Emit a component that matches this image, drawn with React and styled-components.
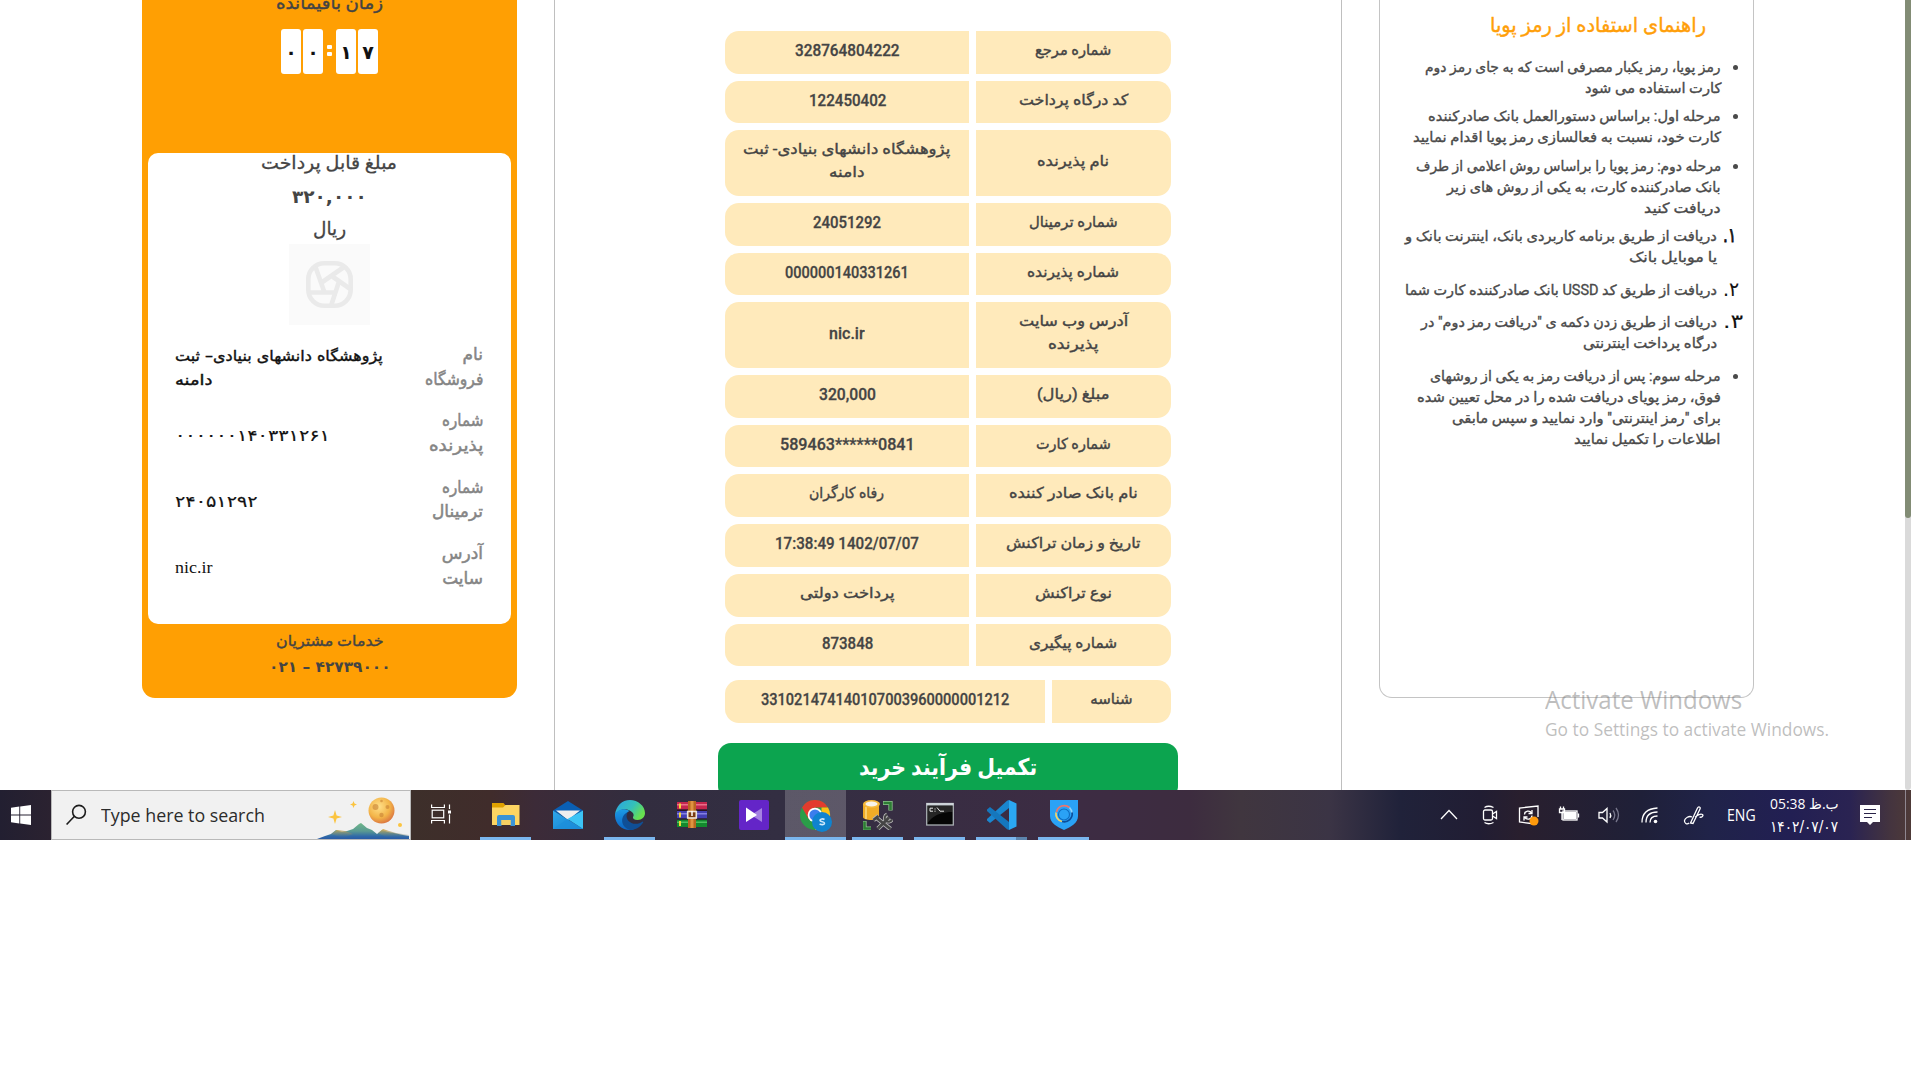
import React, { useLayoutEffect, useRef, useState } from 'react';
import styled, { createGlobalStyle } from 'styled-components';

const Global = createGlobalStyle`
  * { box-sizing: border-box; }
  body { margin: 0; background: #fff; font-family: Roboto, "DejaVu Sans", sans-serif; color: #444; }
`;

/* ---------- text helper: one line condensed to a given width ---------- */
const FitBox = styled.span`
  display: block;
  flex: none;
  width: ${p => p.$w}px;
  height: ${p => p.$lh}px;
  line-height: ${p => p.$lh}px;
  direction: ${p => p.$dir};
`;
const FitText = styled.span`
  display: inline-block;
  vertical-align: top;
  white-space: nowrap;
  height: ${p => p.$lh}px;
  transform-origin: ${p => (p.$dir === 'rtl' ? 'right' : 'left')} center;
  font-family: ${p => p.$font || 'Roboto, "DejaVu Sans", sans-serif'};
  font-size: ${p => p.$size}px;
  font-weight: ${p => p.$weight || 400};
  color: ${p => p.$color || 'inherit'};
  -webkit-text-stroke: ${p => p.$stroke || 0}px currentColor;
`;
function Fit({ w, size = 15, lh = 21, dir = 'rtl', font, weight, color, stroke, children }) {
  const ref = useRef(null);
  const [k, setK] = useState(1);
  useLayoutEffect(() => {
    const n = ref.current.offsetWidth;
    if (n) setK(w / n);
  }, [w, children]);
  return (
    <FitBox $w={w} $lh={lh} $dir={dir}>
      <FitText ref={ref} $lh={lh} $dir={dir} $size={size} $font={font} $weight={weight} $color={color}
        $stroke={stroke} style={{ transform: `scaleX(${k})` }}>
        {children}
      </FitText>
    </FitBox>
  );
}

/* ---------- page frame ---------- */
const Screen = styled.div`
  position: relative;
  width: 1911px;
  height: 840px;
  display: flex;
  flex-direction: column;
`;
const Viewport = styled.div`
  height: 790px;
  display: flex;
  align-items: flex-start;
  padding-left: 142px;
  overflow: hidden;
`;
const ScrollTrack = styled.div`
  width: 6px;
  height: 790px;
  margin-left: auto;
  background: #dadada;
  border-radius: 0 0 3px 3px;
`;
const ScrollThumb = styled.div`
  height: 518px;
  background: #828c75;
  border-radius: 0 0 3px 3px;
`;

/* ---------- merchant card ---------- */
const Merchant = styled.aside`
  width: 375px;
  height: 698px;
  background: #ff9f03;
  border-radius: 0 0 13px 13px;
  display: flex;
  flex-direction: column;
  align-items: center;
  direction: rtl;
`;
const MerchantHead = styled.div`
  height: 153px;
  display: flex;
  flex-direction: column;
  align-items: center;
`;
const HeadTitle = styled.div`
  height: 29px;
  overflow: hidden;
  display: flex;
  align-items: flex-start;
  & > * { margin-top: -9px; }
`;
const Timer = styled.div`
  display: flex;
  direction: ltr;
  align-items: center;
  height: 45px;
  gap: 2px;
`;
const Digit = styled.div`
  width: 20px;
  height: 45px;
  border-radius: 3px;
  background: #fff;
  color: #111;
  font: bold 19px/46px "DejaVu Sans", sans-serif;
  display: flex;
  justify-content: center;
`;
const Colon = styled.div`
  width: 9px;
  display: flex;
  flex-direction: column;
  align-items: center;
  gap: 3px;
  padding-bottom: 2px;
`;
const Dot = styled.i`
  width: 5px;
  height: 4px;
  border-radius: 1px;
  background: #fff;
`;
const Sheet = styled.div`
  width: 363px;
  height: 471px;
  background: #fff;
  border-radius: 10px;
  display: flex;
  flex-direction: column;
  align-items: center;
`;
const Logo = styled.div`
  width: 81px;
  height: 81px;
  margin-top: 7px;
  background: #fafafa;
  display: flex;
  align-items: center;
  justify-content: center;
`;
const Facts = styled.div`
  width: 307px;
  margin-top: 17px;
  display: flex;
  flex-direction: column;
`;
const Fact = styled.div`
  height: 66.4px;
  display: flex;
  justify-content: space-between;
  align-items: flex-start;
`;
const FactLabel = styled.div`
  color: #858585;
`;
const FactValue = styled.div`
  color: #111;
  direction: ltr;
  margin-left: -1px;
  padding-top: ${p => p.$top}px;
`;
const Support = styled.div`
  padding-top: 4px;
  display: flex;
  flex-direction: column;
  align-items: center;
`;

/* ---------- receipt ---------- */
const Receipt = styled.main`
  width: 788px;
  height: 790px;
  margin-left: 37px;
  border: solid #bfbfbf;
  border-width: 0 1px;
  padding: 31px 0 0 163px;
`;
const Table = styled.div`
  width: 460px;
  display: flex;
  flex-direction: column;
  gap: 7px;
  direction: rtl;
  padding: 0 7px;
`;
const Row = styled.div`
  display: flex;
  gap: 7px;
  height: ${p => p.$h}px;
  margin-top: ${p => p.$gap || 0}px;
`;
const Cell = styled.div`
  width: ${p => p.$w}px;
  padding-bottom: 4px;
  background: #ffeabb;
  border-radius: ${p => (p.$side === 'start' ? '0 14px 14px 0' : '14px 0 0 14px')};
  display: flex;
  flex-direction: column;
  align-items: center;
  justify-content: center;
`;
const Finish = styled.button`
  width: 460px;
  height: 56px;
  margin-top: 20px;
  border: 0;
  border-radius: 13px;
  background: #0ca44f;
  color: #fff;
  padding: 8px 0 0;
  display: flex;
  justify-content: center;
  align-items: flex-start;
`;

/* ---------- guide ---------- */
const Guide = styled.section`
  width: 375px;
  height: 698px;
  margin-left: 37px;
  border: 1px solid #c4c4c4;
  border-top: 0;
  border-radius: 0 0 13px 13px;
  direction: rtl;
`;
const GuideTitle = styled.h2`
  margin: 0;
  padding: 11px 47px 0 0;
  height: 57px;
`;
const Item = styled.div`
  display: flex;
  color: #4a4a4a;
  padding-right: ${p => (p.$num ? 0 : 15)}px;
  margin-bottom: ${p => p.$mb}px;
`;
const Bullet = styled.i`
  width: 5px;
  height: 5px;
  margin: 8px 0 0 12px;
  border-radius: 50%;
  background: #4a4a4a;
  flex: none;
`;
const Num = styled.div`
  width: 30px;
  margin-left: 6px;
  height: 20px;
  display: flex;
  justify-content: flex-end;
`;

/* ---------- watermark ---------- */
const Watermark = styled.div`
  position: absolute;
  left: 1545px;
  top: 682px;
  pointer-events: none;
  color: rgba(125, 125, 125, 0.5);
`;

/* ---------- taskbar ---------- */
const Taskbar = styled.footer`
  height: 50px;
  display: flex;
  background: linear-gradient(90deg, #221f31 0, #2b2230 51px, #3d2f2a 411px, #402c2b 490px, #3c2b38 535px,
    #322d3f 640px, #332e42 780px, #3d2c43 1080px, #3d2c3f 1190px, #40363f 1240px, #3b3445 1330px,
    #20223a 1400px, #211d33 1480px, #291f2e 1520px, #1f2038 1640px, #202349 1710px, #221f53 1790px,
    #2a2352 1850px, #44343f 1890px, #4e3a38 1911px);
`;
const Start = styled.div`
  width: 51px;
  display: flex;
  align-items: center;
  padding-left: 11px;
`;
const Search = styled.div`
  width: 360px;
  background: #f1f1f1;
  border: 1px solid #b9b9b9;
  display: flex;
  color: #2b2b2b;
`;
const SearchIcon = styled.div`
  width: 49px;
  padding: 13px 0 0 14px;
`;
const SearchText = styled.div`
  width: 215px;
  padding-top: 11px;
`;
const TaskView = styled.div`
  width: 64px;
  padding: 14px 0 0 20px;
`;
const Slot = styled.div`
  width: 62px;
  display: flex;
  flex-direction: column;
  align-items: center;
  justify-content: space-between;
  padding-top: 10px;
  background: ${p => (p.$active ? 'linear-gradient(90deg, rgba(255,255,255,.2) 61px, transparent 61px)' : 'none')};
`;
const Running = styled.div`
  width: ${p => (p.$wide ? 61 : 51)}px;
  height: 3px;
  margin-left: -1px;
  background: ${p => (p.$split ? 'linear-gradient(90deg, #7ab6ee 40px, #5c84ad 40px)' : p.$on ? '#7ab6ee' : 'none')};
`;
const Tray = styled.div`
  margin-left: auto;
  display: flex;
`;
const TrayIcon = styled.div`
  width: ${p => p.$w}px;
  padding-top: 13px;
  svg { display: block; }
`;
const Lang = styled.div`
  width: 43px;
  padding-top: 13px;
  color: #fff;
`;
const Clock = styled.div`
  width: 90px;
  padding-top: 3px;
  color: #fff;
`;
const Notify = styled.div`
  width: 45px;
  padding-top: 15px;
`;
const Peek = styled.div`
  width: 6px;
  border-left: 1px solid #8f8791;
`;

const SEGOE = '"Open Sans", "Noto Sans", "DejaVu Sans", sans-serif';
const FA = '"DejaVu Sans", sans-serif';

const rows = [
  { h: 43, l: [['شماره مرجع', 76]], v: [['328764804222', 105]] },
  { h: 42, l: [['کد درگاه پرداخت', 109]], v: [['122450402', 77]] },
  { h: 66, l: [['نام پذیرنده', 72]], v: [['پژوهشگاه دانشهای بنیادی- ثبت', 207, 1], ['دامنه', 35, 1]] },
  { h: 43, l: [['شماره ترمینال', 89]], v: [['24051292', 68]] },
  { h: 42, l: [['شماره پذیرنده', 92]], v: [['000000140331261', 124]] },
  { h: 66, l: [['آدرس وب سایت', 109], ['پذیرنده', 50]], v: [['nic.ir', 36]] },
  { h: 43, l: [['مبلغ (ریال)', 72]], v: [['320,000', 57]] },
  { h: 42, l: [['شماره کارت', 75]], v: [['589463******0841', 135]] },
  { h: 43, l: [['نام بانک صادر کننده', 129]], v: [['رفاه کارگران', 75, 1]] },
  { h: 43, l: [['تاریخ و زمان تراکنش', 135]], v: [['17:38:49 1402/07/07', 144]] },
  { h: 43, l: [['نوع تراکنش', 77]], v: [['پرداخت دولتی', 95, 1]] },
  { h: 42, l: [['شماره پیگیری', 88]], v: [['873848', 51]] },
  { h: 43, gap: 7, lw: 119, l: [['شناسه', 42]], v: [['331021474140107003960000001212', 248]] },
];

const guide = [
  { mb: 7, t: [['رمز پویا، رمز یکبار مصرفی است که به جای رمز دوم', 296], ['کارت استفاده می شود', 136]] },
  { mb: 8, t: [['مرحله اول: براساس دستورالعمل بانک صادرکننده', 293], ['کارت خود، نسبت به فعالسازی رمز پویا اقدام نمایید', 308]] },
  { mb: 7, t: [['مرحله دوم: رمز پویا را براساس روش اعلامی از طرف', 305], ['بانک صادرکننده کارت، به یکی از روش های زیر', 274], ['دریافت کنید', 77]] },
  { n: '۱.', nw: 13, mb: 12, t: [['دریافت از طریق برنامه کاربردی بانک، اینترنت بانک و', 312], ['یا موبایل بانک', 88]] },
  { n: '۲.', nw: 16, mb: 11, t: [['دریافت از طریق کد USSD بانک صادرکننده کارت شما', 312]] },
  { n: '۳.', nw: 20, mb: 12, t: [['دریافت از طریق زدن دکمه ی "دریافت رمز دوم" در', 296], ['درگاه پرداخت اینترنتی', 134]] },
  { mb: 0, t: [['مرحله سوم: پس از دریافت رمز به یکی از روشهای', 291], ['فوق، رمز پویای دریافت شده را در محل تعیین شده', 304], ['برای "رمز اینترنتی" وارد نمایید و سپس مابقی', 269], ['اطلاعات را تکمیل نمایید', 147]] },
];

const facts = [
  { l: [['نام', 20], ['فروشگاه', 58]], v: [['پژوهشگاه دانشهای بنیادی– ثبت', 208], ['دامنه', 37]], top: 2 },
  { l: [['شماره', 41], ['پذیرنده', 54]], v: [['۰۰۰۰۰۰۱۴۰۳۳۱۲۶۱', 155]], top: 16, num: true },
  { l: [['شماره', 41], ['ترمینال', 51]], v: [['۲۴۰۵۱۲۹۲', 83]], top: 15, num: true },
  { l: [['آدرس', 41], ['سایت', 41]], v: [['nic.ir', 37]], top: 15, serif: true },
];

/* ---------- icons ---------- */
const Aperture = () => (
  <svg width="47" height="47" viewBox="0 0 47 47" fill="none" stroke="#eaeaea" strokeWidth="4.6">
    <rect x="2.3" y="2.3" width="42.4" height="42.4" rx="16" />
    <path d="M9.500 6l9 25.500M38 6L15 22M25 14.500L45 28.500M4 31.500h26.500M25 45l7.500-23" />
  </svg>
);
const WinLogo = () => (
  <svg width="20" height="20" viewBox="0 0 20 20" fill="#fff">
    <path d="M0 2.8l8.3-1.2v8H0zM9.2 1.5L20 0v9.6H9.2zM0 10.5h8.3v8L0 17.300zM9.200 10.500H20V20L9.200 18.600z" />
  </svg>
);
const Glass = () => (
  <svg width="22" height="22" viewBox="0 0 22 22" fill="none" stroke="#1c1c1c" strokeWidth="1.6">
    <circle cx="13" cy="7.800" r="6.400" /><path d="M8.400 12.300L.6 20.500" />
  </svg>
);
const Scene = () => (
  <svg width="94" height="48" viewBox="0 0 94 48">
    <defs>
      <radialGradient id="moon" cx=".4" cy=".35" r=".7"><stop offset="0" stopColor="#ffe08a" /><stop offset=".6" stopColor="#f3b549" /><stop offset="1" stopColor="#d9703f" /></radialGradient>
      <linearGradient id="hill" x1="0" y1="0" x2="0" y2="1"><stop offset="0" stopColor="#6fb78a" /><stop offset=".45" stopColor="#5a9a92" /><stop offset=".75" stopColor="#2f68a8" /><stop offset="1" stopColor="#2450a4" /></linearGradient>
      <linearGradient id="gold" x1="0" y1="0" x2="0" y2="1"><stop offset="0" stopColor="#d8ab4a" /><stop offset="1" stopColor="#3f6f9c" stopOpacity="0" /></linearGradient>
    </defs>
    <path d="M1 48l8-3 6-2 5-4 6 2 5-1 6-2 6-5 2-1 6 5 5 2 5 4 5-4 6 2 6 1 9 2 6 1v5z" fill="url(#hill)" />
    <path d="M15 43l6-4 8 1 8 3-10 4zM62 42l5-4 6 2 7 2 13 2v2H70z" fill="url(#gold)" />
    <circle cx="65.500" cy="19.500" r="13" fill="url(#moon)" />
    <g fill="#c98234" opacity=".6"><circle cx="59.500" cy="16" r="3" /><circle cx="71.500" cy="16" r="2" /><circle cx="65.500" cy="24" r="2.200" /><circle cx="65.500" cy="10" r="1.300" /></g>
    <g fill="#fbc440"><path d="M19 19l1.600 5.400 5.400 1.600-5.400 1.600-1.600 5.400-1.600-5.400L12 26l5.400-1.600zM37.500 10l1 2.500 2.500 1-2.500 1-1 2.500-1-2.500-2.500-1 2.500-1z" /><circle cx="84" cy="34" r="2" /></g>
  </svg>
);
const TaskViewIcon = () => (
  <svg width="21" height="20" viewBox="0 0 21 20" fill="none" stroke="#fff" strokeWidth="1.200">
    <path d="M.6.500v3h12.800v-3M.6 19.500v-3h12.800v3M18.500.500v4.500M18.500 10.500v9" /><rect x="1.200" y="6.200" width="11.500" height="7.600" /><path fill="#fff" stroke="none" d="M17 6.500h3v3h-3z" />
  </svg>
);
const Folder = () => (
  <svg width="30" height="30" viewBox="0 0 30 30">
    <path d="M1 3h11.500l2 2.500V8H1z" fill="#e0a100" /><path d="M1 7.500h11L14.500 5H28.500V25H1z" fill="#fdd562" />
    <path d="M6 26V17a2 2 0 0 1 2-2H22a2 2 0 0 1 2 2v9h-4.500v-6h-9v6z" fill="#3a93d6" /><path d="M10.500 20h9v5h-9z" fill="#f6cf62" />
  </svg>
);
const Mail = () => (
  <svg width="30" height="30" viewBox="0 0 30 30">
    <defs><linearGradient id="ml" x1="0" y1="0" x2="1" y2="1"><stop offset="0" stopColor="#2ea6ea" /><stop offset="1" stopColor="#1583d0" /></linearGradient></defs>
    <path d="M0 10.500L15 1l15 9.500-15 9z" fill="#0a5fb4" /><path d="M3 10.500h24L15 20z" fill="#f0efef" />
    <path d="M0 10.500L30 29H0z" fill="url(#ml)" /><path d="M30 10.500v18.500L14.500 19z" fill="#3cc4f5" /><path d="M14.500 19L30 29H0z" fill="#1d8fdc" opacity=".7" />
  </svg>
);
const Edge = () => (
  <svg width="30" height="30" viewBox="0 0 30 30">
    <defs>
      <linearGradient id="e1" x1="0" y1="0" x2="1" y2=".5"><stop offset="0" stopColor="#2aa3e6" /><stop offset=".6" stopColor="#35c1b8" /><stop offset="1" stopColor="#68e04f" /></linearGradient>
      <linearGradient id="e2" x1="0" y1="0" x2="0" y2="1"><stop offset="0" stopColor="#1c9be6" /><stop offset="1" stopColor="#0b63c2" /></linearGradient>
    </defs>
    <path d="M0 14.500C1 6 7 0 15 0s15 6 15 13c0 4-3 7-7.500 7-3.500 0-5-1.500-4.500-3 1-1.200.8-3-.3-4.300C13 7.500 5 8 0 14.500z" fill="url(#e1)" />
    <path d="M0 14C3 8.500 10 8 14.500 11c-3 1-4.500 4-4 7 .8 5 6 8.500 11 9.500C19 29.500 17 30 15 30 6 30-.5 23 0 14z" fill="url(#e2)" />
    <path d="M13 12c-3 4-1 9 3.500 11 4 1.800 8.500.5 11-1.500 1 0 .8 1 .3 1.500C25 27.500 20 30 15 30c-6-2-9-7-7.500-12 .8-3 3-5 5.500-6z" fill="#0f4f96" />
  </svg>
);
const Rar = () => (
  <svg width="30" height="30" viewBox="0 0 30 30">
    <path d="M0 2h30v7.500H0z" fill="#c5274e" /><path d="M0 11h30v7.500H0z" fill="#4440b4" /><path d="M0 19.500h30V27H0z" fill="#138a2e" />
    <path d="M0 4h30v1.500H0z" fill="#e8708a" /><path d="M0 13h30v1.500H0z" fill="#8480e0" /><path d="M0 21.500h30V23H0z" fill="#4cc060" />
    <path d="M2 3.500h2v5H2zM2 12.500h2v5H2zM2 21h2v5H2z" fill="#f4d83a" /><path d="M0 9.500h30V11H0zM0 18.500h30v1H0z" fill="#2a1420" />
    <path d="M11 1h8v27h-8z" fill="#b8661f" /><path d="M13.500 1h3v27h-3z" fill="#de9440" />
    <rect x="10.700" y="11.500" width="8.600" height="6.500" fill="#7a3c10" stroke="#ece5d8" strokeWidth="1.600" /><path d="M15 11v5" stroke="#fff" strokeWidth="1.500" />
  </svg>
);
const Player = () => (
  <svg width="30" height="30" viewBox="0 0 30 30">
    <rect width="30" height="30" rx="2" fill="#6425c8" /><path d="M23 8v14l-11-7z" fill="#a582e2" /><path d="M7 7.500v14.500L18 15z" fill="#fff" />
  </svg>
);
const Chrome = () => (
  <svg width="32" height="32" viewBox="0 0 32 32">
    <circle cx="15" cy="15" r="15" fill="#2a9d48" />
    <path d="M2 7.500A15 15 0 0 1 28 7.500L15 7.500 8.500 18.800z" fill="#e33b2e" /><path d="M28 7.500A15 15 0 0 1 15 30l6.500-11.200V7.500z" fill="#fbc116" />
    <circle cx="15" cy="15" r="7.300" fill="#fff" /><circle cx="15" cy="15" r="5.600" fill="#3b7ded" />
    <circle cx="22" cy="22" r="10" fill="#0f83cf" /><path d="M24.500 19.500c-1.500-1-4.500-.8-4.500.8 0 2 4.500 1 4.500 3 0 1.700-3.200 1.700-4.900.6" stroke="#cfe9fb" strokeWidth="1.600" fill="none" />
  </svg>
);
const Database = () => (
  <svg width="30" height="30" viewBox="0 0 30 30">
    <path d="M0 4v13c0 4 16 4 16 0V4z" fill="#f0ac26" /><path d="M3 7v12" stroke="#f9cf6a" strokeWidth="2" /><ellipse cx="8.500" cy="4" rx="8.500" ry="4" fill="#f5b93c" /><ellipse cx="8.500" cy="4" rx="6" ry="2.400" fill="#f6f2ea" />
    <path d="M20 3h7.500v7.500M1.500 21v7.500H8" stroke="#8fc48f" strokeWidth="4.200" fill="none" /><path d="M20.500 3h7v7M1.500 21.500v7H8" stroke="#2d7d34" strokeWidth="2.600" fill="none" />
    <path d="M15 28.500L26 17.500M27.500 29L13 17.500M10.500 20l5-4" stroke="#b6b6b6" strokeWidth="4.400" fill="none" /><path d="M24 14.500a3.800 3.800 0 1 0 5 5" stroke="#b6b6b6" strokeWidth="3.600" fill="none" /><path d="M15 28.500L26 17.500M27.500 29L13 17.500M10.500 20l5-4" stroke="#454545" strokeWidth="2.800" fill="none" />
    <path d="M24 14.500a3.800 3.800 0 1 0 5 5" stroke="#454545" strokeWidth="2" fill="none" />
  </svg>
);
const Cmd = () => (
  <svg width="30" height="30" viewBox="0 0 30 30">
    <rect x="1.700" y="3.500" width="26.600" height="21.500" fill="#050505" stroke="#a9afb3" strokeWidth="1.300" /><path d="M1.500 3h27v2.500h-27z" fill="#cdd3d8" />
    <path d="M2.500 6h25v6C18 12 12 14 6 19l-3.500 4z" fill="#fff" opacity=".13" /><path d="M8 8.200H5v3h3M10 8.500v1M10 10.700v1M12 7.500l3 3.700h4" stroke="#e5e5e5" fill="none" />
  </svg>
);
const Code = () => (
  <svg width="30" height="30" viewBox="0 0 30 30">
    <path d="M22 8L3 23l-3-2.500v-1.500L20 .800 22 0z" fill="#1a86cf" /><path d="M22 22L3 7 0 9.500V11l20 18.200 2 .8z" fill="#1577bd" />
    <path d="M22 0l7.500 3.500v23L22 30z" fill="#2ba8f2" />
  </svg>
);
const Shield = () => (
  <svg width="30" height="30" viewBox="0 0 30 30">
    <path d="M1 0h28v16c0 7-7 11-14 14C8 27 1 23 1 16z" fill="#2aa2f6" />
    <g fill="none" strokeWidth="1.700"><path d="M7.500 12a8 8 0 0 1 13-4.500" stroke="#f0746a" /><path d="M7 12.500a8 8 0 0 0 6 9" stroke="#f4d56a" /><path d="M23 12a8 8 0 0 1-10 9.500" stroke="#0b4f9c" /><path d="M20.500 7.500a8 8 0 0 1 2.300 5" stroke="#8fd4fb" /><circle cx="15" cy="14.500" r="5.500" stroke="#0f6cc0" strokeWidth="1.100" /></g>
  </svg>
);
const apps = [
  { I: Folder, on: 1 }, { I: Mail }, { I: Edge, on: 1 }, { I: Rar }, { I: Player },
  { I: Chrome, on: 1, active: 1 }, { I: Database, on: 1 }, { I: Cmd, on: 1 }, { I: Code, on: 1, split: 1 }, { I: Shield, on: 1 },
];
const S = ({ w = 22, children }) => (
  <svg width={w} height="24" viewBox={`0 0 ${w} 24`} fill="none" stroke="#fff" strokeWidth="1.300">{children}</svg>
);

export default function App() {
  return (
    <>
      <Global />
      <Screen>
        <Viewport>
          <Merchant>
            <MerchantHead>
              <HeadTitle><Fit w={107} size={17} lh={24} stroke={0.4}>زمان باقیمانده</Fit></HeadTitle>
              <Timer>
                <Digit>۰</Digit><Digit>۰</Digit>
                <Colon><Dot /><Dot /></Colon>
                <Digit>۱</Digit><Digit>۷</Digit>
              </Timer>
            </MerchantHead>
            <Sheet>
              <Fit w={136} size={18} lh={20} stroke={0.3}>مبلغ قابل پرداخت</Fit>
              <Fit w={75} size={18} lh={47} dir="ltr" weight={700} font={FA}>۳۲۰,۰۰۰</Fit>
              <Fit w={33} size={19} lh={17} stroke={0.3}>ریال</Fit>
              <Logo><Aperture /></Logo>
              <Facts>
                {facts.map((f, i) => (
                  <Fact key={i}>
                    <FactLabel>{f.l.map(([t, w]) => <Fit key={t} w={w} size={17} lh={24.500} stroke={0.5}>{t}</Fit>)}</FactLabel>
                    <FactValue $top={f.top}>
                      {f.v.map(([t, w]) => (
                        <Fit key={t} w={w} size={f.serif ? 17 : f.num ? 16 : 15} lh={24} dir={f.num || f.serif ? 'ltr' : 'rtl'}
                          stroke={f.serif ? 0 : f.num ? 0.2 : 0.4} font={f.serif ? '"Liberation Serif", serif' : FA}>{t}</Fit>
                      ))}
                    </FactValue>
                  </Fact>
                ))}
              </Facts>
            </Sheet>
            <Support>
              <Fit w={108} size={15} lh={26} stroke={0.4}>خدمات مشتریان</Fit>
              <Fit w={122} size={15} lh={26} dir="ltr" weight={700} font={FA}>۰۲۱ – ۴۲۷۳۹۰۰۰</Fit>
            </Support>
          </Merchant>

          <Receipt>
            <Table>
              {rows.map((r, i) => (
                <Row key={i} $h={r.h} $gap={r.gap}>
                  <Cell $w={r.lw || 195} $side="start">
                    {r.l.map(([t, w]) => <Fit key={t} w={w} size={15} lh={23} stroke={0.4}>{t}</Fit>)}
                  </Cell>
                  <Cell $w={439 - (r.lw || 195)} $side="end">
                    {r.v.map(([t, w, fa]) => (
                      <Fit key={t} w={w} size={fa ? 15 : 16.500} lh={23} dir={fa ? 'rtl' : 'ltr'} weight={fa ? 400 : 500}
                        stroke={fa ? 0.4 : 0.3}>{t}</Fit>
                    ))}
                  </Cell>
                </Row>
              ))}
            </Table>
            <Finish><Fit w={178} size={23} lh={33} weight={700}>تکمیل فرآیند خرید</Fit></Finish>
          </Receipt>

          <Guide>
            <GuideTitle><Fit w={216} size={20} lh={28} color="#ff9f0a" stroke={0.4}>راهنمای استفاده از رمز پویا</Fit></GuideTitle>
            {guide.map((g, i) => (
              <Item key={i} $num={!!g.n} $mb={g.mb}>
                {g.n ? <Num><Fit w={g.nw} size={20} lh={18} color="#111" font={FA} stroke={g.n === '۱.' ? 0.8 : 0.1}>{g.n}</Fit></Num> : <Bullet />}
                <div>{g.t.map(([t, w]) => <Fit key={t} w={w} size={14} lh={21} stroke={0.35}>{t}</Fit>)}</div>
              </Item>
            ))}
          </Guide>
          <ScrollTrack><ScrollThumb /></ScrollTrack>
        </Viewport>

        <Taskbar>
          <Start><WinLogo /></Start>
          <Search>
            <SearchIcon><Glass /></SearchIcon>
            <SearchText><Fit w={164} size={19} lh={26} dir="ltr" font={SEGOE}>Type here to search</Fit></SearchText>
            <Scene />
          </Search>
          <TaskView><TaskViewIcon /></TaskView>
          {apps.map(({ I, on, active, split }, i) => (
            <Slot key={i} $active={active}>
              <I /><Running $on={on} $wide={active} $split={split} />
            </Slot>
          ))}
          <Tray>
            <TrayIcon $w={41}><S w={18}><path d="M1 16l8-8.500 8 8.500" /></S></TrayIcon>
            <TrayIcon $w={37}><S w={18}><rect x="2.500" y="7" width="9" height="10" rx="1.500" /><path d="M11.500 11l4-2.500v7l-4-2.500M3.500 4.500q4-2.500 9 0M3.500 19.500q4 2.500 9 0" /></S></TrayIcon>
            <TrayIcon $w={40}><S w={22}><path d="M13 20.500L1.500 19V5L20 3v11" /><path d="M6.500 11.500c0-4 5.500-4.500 7-1.500M14 7v3.500h-3.500M14 12.500c0 4-5.500 5-7.500 1.500M6 17.500V14h3.500" /><circle cx="16" cy="18" r="4.500" fill="#ff9a0c" stroke="none" /></S></TrayIcon>
            <TrayIcon $w={40}><S w={22}><rect x="5" y="8" width="14" height="9" /><path d="M6.500 9.500H17.500V15.500H6.500z" fill="#fff" /><path d="M20.500 10.500v4M1.500 6h5v3.500H1.500zM4 9.500V17M2.500 3.500V6M5.500 3.500V6" /></S></TrayIcon>
            <TrayIcon $w={43}><S w={22}><path d="M1 9.500h3.500l4.500-4v13.500l-4.500-4H1z" /><path d="M12 10q1.500 2.500 0 5" /><path d="M15 7.500q3.500 4.500 0 9.500M18 5q5 7 0 14" stroke="#77768b" /></S></TrayIcon>
            <TrayIcon $w={42}><S w={18}><path d="M1 19.500C1 10 7 5.500 16.500 5M5 19.500C5 13 9 9 16.500 9M9 19.500c0-4 2.500-6.500 7.500-6.500" /><circle cx="14.500" cy="18.500" r="1.800" fill="#fff" stroke="none" /></S></TrayIcon>
            <TrayIcon $w={44}><S w={22}><path d="M6 20c-2 2-5 0-4.500-2.500S6 12.500 9 14M7.500 20l7-15c1-2 3.500-1 2.500 1l-7 14.500zM12 14c2-1 4.500-4 7.500-2.500 1.500 1-1 3.500-3 2.500" /></S></TrayIcon>
            <Lang><Fit w={29} size={15.500} lh={24} dir="ltr" font={SEGOE}>ENG</Fit></Lang>
            <Clock>
              <Fit w={69} size={14.500} lh={22} dir="ltr" font={SEGOE}>05:38 ب.ظ</Fit>
              <Fit w={68} size={15.500} lh={24} dir="ltr" font={FA}>۱۴۰۲/۰۷/۰۷</Fit>
            </Clock>
            <Notify>
              <svg width="20" height="20" viewBox="0 0 20 20"><path d="M0 0h20v17h-7l-3 3-3-3H0z" fill="#fff" /><path d="M4 4.500h12M4 8.500h12M4 12.500h8" stroke="#2a2348" strokeWidth="1.200" /></svg>
            </Notify>
            <Peek />
          </Tray>
        </Taskbar>
        <Watermark>
          <Fit w={197} size={25} lh={34} dir="ltr" font={SEGOE}>Activate Windows</Fit>
          <Fit w={284} size={18.500} lh={26} dir="ltr" font={SEGOE}>Go to Settings to activate Windows.</Fit>
        </Watermark>
      </Screen>
    </>
  );
}
